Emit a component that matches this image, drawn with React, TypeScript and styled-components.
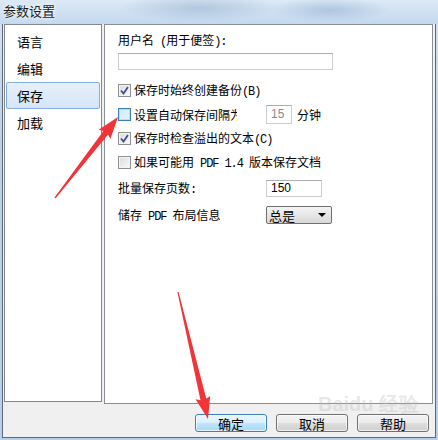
import React from "react";
import styled, { createGlobalStyle } from "styled-components";

const Global = createGlobalStyle`
  html, body { margin: 0; padding: 0; }
  body {
    width: 438px; height: 440px; overflow: hidden;
    background: #c3d7ec;
    font-family: "Noto Sans CJK SC", "Liberation Sans", sans-serif;
    font-size: 12px; color: #000;
  }
`;

const Frame = styled.div`
  position: relative;
  width: 438px;
  height: 440px;
  display: flex;
  flex-direction: column;
  background: linear-gradient(180deg, #d6e5f4 0%, #bcd3ea 30%, #b7cfe8 100%);
`;

const TitleBar = styled.div`
  height: 24px;
  display: flex;
  align-items: center;
  padding: 0 0 4px 3px;
  box-sizing: border-box;
  font-size: 13px;
  color: #1a1a1a;
  text-shadow: 0 0 6px #fff, 0 0 3px #fff;
  background:
    radial-gradient(ellipse 80px 14px at 200px 8px, rgba(150,175,205,0.55), transparent),
    radial-gradient(ellipse 60px 12px at 330px 10px, rgba(140,170,205,0.5), transparent),
    linear-gradient(180deg, #dce9f6 0%, #c4d8ee 100%);
`;

const Client = styled.div`
  margin: 0 2px 2px 2px;
  height: 414px;
  box-sizing: border-box;
  border: 1px solid #5e6878;
  border-top: none;
  background: #f0f0f0;
  display: flex;
  flex-direction: column;
  padding: 0 1px 0 1px;
`;

const Panes = styled.div`
  display: flex;
  gap: 2px;
  align-items: flex-start;
`;

const ListBox = styled.div`
  width: 98px;
  height: 378px;
  box-sizing: border-box;
  border: 1px solid #828790;
  background: #fff;
  padding: 3px 1px;
  display: flex;
  flex-direction: column;
`;

const ListItem = styled.div<{ $selected?: boolean }>`
  height: 27px;
  box-sizing: border-box;
  display: flex;
  align-items: center;
  padding-left: 10px;
  font-size: 13px;
  border: 1px solid ${(p) => (p.$selected ? "#84acdd" : "transparent")};
  border-radius: 2px;
  background: ${(p) =>
    p.$selected ? "linear-gradient(180deg, #e6f0fb 0%, #d5e5f8 100%)" : "transparent"};
`;

const Panel = styled.div`
  width: 329px;
  height: 380px;
  box-sizing: border-box;
  border: 1px solid #8a8f96;
  background: #fff;
  padding: 6px 0 0 13px;
  display: flex;
  flex-direction: column;
`;

const Label = styled.div`
  height: 18px;
  display: flex;
  align-items: center;
  white-space: pre;
`;

const Text = styled.span<{ $clip?: number }>`
  white-space: pre;
  display: inline-block;
  overflow: hidden;
  ${(p) => (p.$clip ? `width: ${p.$clip}px;` : "")}
`;

const Mono = styled.span`
  font-family: "Liberation Mono", monospace;
  font-size: 12px;
  letter-spacing: -1.1px;
`;

const TextInput = styled.div<{ $w: number; $h: number; $disabled?: boolean }>`
  width: ${(p) => p.$w}px;
  height: ${(p) => p.$h}px;
  box-sizing: border-box;
  border: 1px solid #c9ced6;
  border-top-color: #abadb3;
  background: #fff;
  display: flex;
  align-items: center;
  padding-left: 4px;
  font-family: "Liberation Sans", sans-serif;
  font-size: 12px;
  color: ${(p) => (p.$disabled ? "#8a8a8a" : "#000")};
`;

const NameInput = styled(TextInput)`
  margin-top: 4px;
  margin-bottom: 8px;
`;

const IntervalInput = styled(TextInput)`
  margin-left: 29px;
`;

const Row = styled.div`
  height: 24px;
  display: flex;
  align-items: center;
`;

const FormRow = styled.div<{ $h: number }>`
  height: ${(p) => p.$h}px;
  display: grid;
  grid-template-columns: 148px auto auto;
  align-items: center;
  white-space: pre;
`;

const Box = styled.div<{ $hover?: boolean }>`
  width: 13px;
  height: 13px;
  flex: none;
  box-sizing: border-box;
  border: 1px solid ${(p) => (p.$hover ? "#3c7fb1" : "#8e8f8f")};
  margin-right: 3px;
  display: flex;
  align-items: center;
  justify-content: center;
  background: ${(p) =>
    p.$hover
      ? "linear-gradient(135deg, #cfe8fa 0%, #e8f5fd 100%)"
      : "linear-gradient(135deg, #dcdcdc 0%, #f8f8f8 100%)"};
  box-shadow: inset 0 0 0 1px ${(p) => (p.$hover ? "#b9dcf7" : "#f4f4f4")};
`;

const Unit = styled.span`
  margin-left: 5px;
`;

const Select = styled.div`
  width: 66px;
  height: 18px;
  box-sizing: border-box;
  border: 1px solid #707070;
  border-radius: 2px;
  background: linear-gradient(180deg, #f4f4f4 0%, #e6e6e6 50%, #d8d8d8 100%);
  display: flex;
  align-items: center;
  justify-content: space-between;
  padding: 0 5px 0 2px;
  font-size: 13px;
`;

const Caret = styled.span`
  width: 0;
  height: 0;
  border-left: 4px solid transparent;
  border-right: 4px solid transparent;
  border-top: 4px solid #000;
`;

const ButtonBar = styled.div`
  flex: 1;
  display: flex;
  justify-content: flex-end;
  align-items: flex-start;
  gap: 9px;
  padding: 10px 5px 0 0;
`;

const Button = styled.div<{ $default?: boolean }>`
  width: 72px;
  height: 18px;
  box-sizing: border-box;
  border: 1px solid ${(p) => (p.$default ? "#3c7fb1" : "#707070")};
  border-radius: 3px;
  background: ${(p) =>
    p.$default
      ? "linear-gradient(180deg, #eaf6fd 0%, #d9f0fc 50%, #bee6fd 51%, #a7d9f5 100%)"
      : "linear-gradient(180deg, #f2f2f2 0%, #ebebeb 50%, #dddddd 51%, #cfcfcf 100%)"};
  box-shadow: inset 0 0 0 1px rgba(255,255,255,0.7);
  display: flex;
  align-items: center;
  justify-content: center;
  font-size: 13px;
`;

const Overlay = styled.svg`
  position: absolute;
  left: 0;
  top: 0;
  pointer-events: none;
`;

const Watermark = styled.div`
  position: absolute;
  left: 318px;
  top: 394px;
  font-family: "Liberation Sans", sans-serif;
  font-size: 20px;
  font-weight: bold;
  color: rgba(190, 190, 190, 0.35);
  line-height: 1;
  pointer-events: none;
`;

const Check = () => (
  <svg width="9" height="9" viewBox="0 0 9 9">
    <path d="M1 4.5 L3.5 7.5 L8 1" fill="none" stroke="#3d4f8f" strokeWidth="1.8" />
  </svg>
);

function arrow(tx: number, ty: number, hx: number, hy: number) {
  const dx = hx - tx;
  const dy = hy - ty;
  const len = Math.hypot(dx, dy);
  const ux = dx / len;
  const uy = dy / len;
  const nx = -uy;
  const ny = ux;
  const headLen = 20;
  const bx = hx - ux * headLen;
  const by = hy - uy * headLen;
  const p = (x: number, y: number) => `${x.toFixed(1)},${y.toFixed(1)}`;
  return [
    p(tx + nx * 0.6, ty + ny * 0.6),
    p(bx + nx * 3, by + ny * 3),
    p(bx - ux * 2 + nx * 7.5, by - uy * 2 + ny * 7.5),
    p(hx, hy),
    p(bx - ux * 2 - nx * 7.5, by - uy * 2 - ny * 7.5),
    p(bx - nx * 3, by - ny * 3),
    p(tx - nx * 0.6, ty - ny * 0.6),
  ].join(" ");
}

export default function App() {
  return (
    <>
      <Global />
      <Frame>
        <TitleBar>参数设置</TitleBar>
        <Client>
          <Panes>
            <ListBox>
              <ListItem>语言</ListItem>
              <ListItem>编辑</ListItem>
              <ListItem $selected>保存</ListItem>
              <ListItem>加载</ListItem>
            </ListBox>
            <Panel>
              <Label>
                <Text>用户名<Mono> (</Mono>用于便签<Mono>):</Mono></Text>
              </Label>
              <NameInput $w={215} $h={17} />
              <Row>
                <Box><Check /></Box>
                <Text>保存时始终创建备份<Mono>(B)</Mono></Text>
              </Row>
              <Row>
                <Box $hover />
                <Text $clip={103}>设置自动保存间隔为</Text>
                <IntervalInput $w={26} $h={19} $disabled>15</IntervalInput>
                <Unit>分钟</Unit>
              </Row>
              <Row>
                <Box><Check /></Box>
                <Text>保存时检查溢出的文本<Mono>(C)</Mono></Text>
              </Row>
              <Row>
                <Box />
                <Text>如果可能用<Mono> PDF 1.4 </Mono>版本保存文档</Text>
              </Row>
              <FormRow $h={28}>
                <Text>批量保存页数<Mono>:</Mono></Text>
                <TextInput $w={56} $h={17}>150</TextInput>
              </FormRow>
              <FormRow $h={26}>
                <Text>储存<Mono> PDF </Mono>布局信息</Text>
                <Select>
                  <span>总是</span>
                  <Caret />
                </Select>
              </FormRow>
            </Panel>
          </Panes>
          <ButtonBar>
            <Button $default>确定</Button>
            <Button>取消</Button>
            <Button>帮助</Button>
          </ButtonBar>
        </Client>
        <Watermark>Baidu 经验</Watermark>
        <Overlay width="438" height="440" viewBox="0 0 438 440">
          <polygon points={arrow(55, 198, 118, 117)} fill="#f0343a" />
          <polygon points={arrow(178, 292, 208, 419)} fill="#f0343a" />
        </Overlay>
      </Frame>
    </>
  );
}
